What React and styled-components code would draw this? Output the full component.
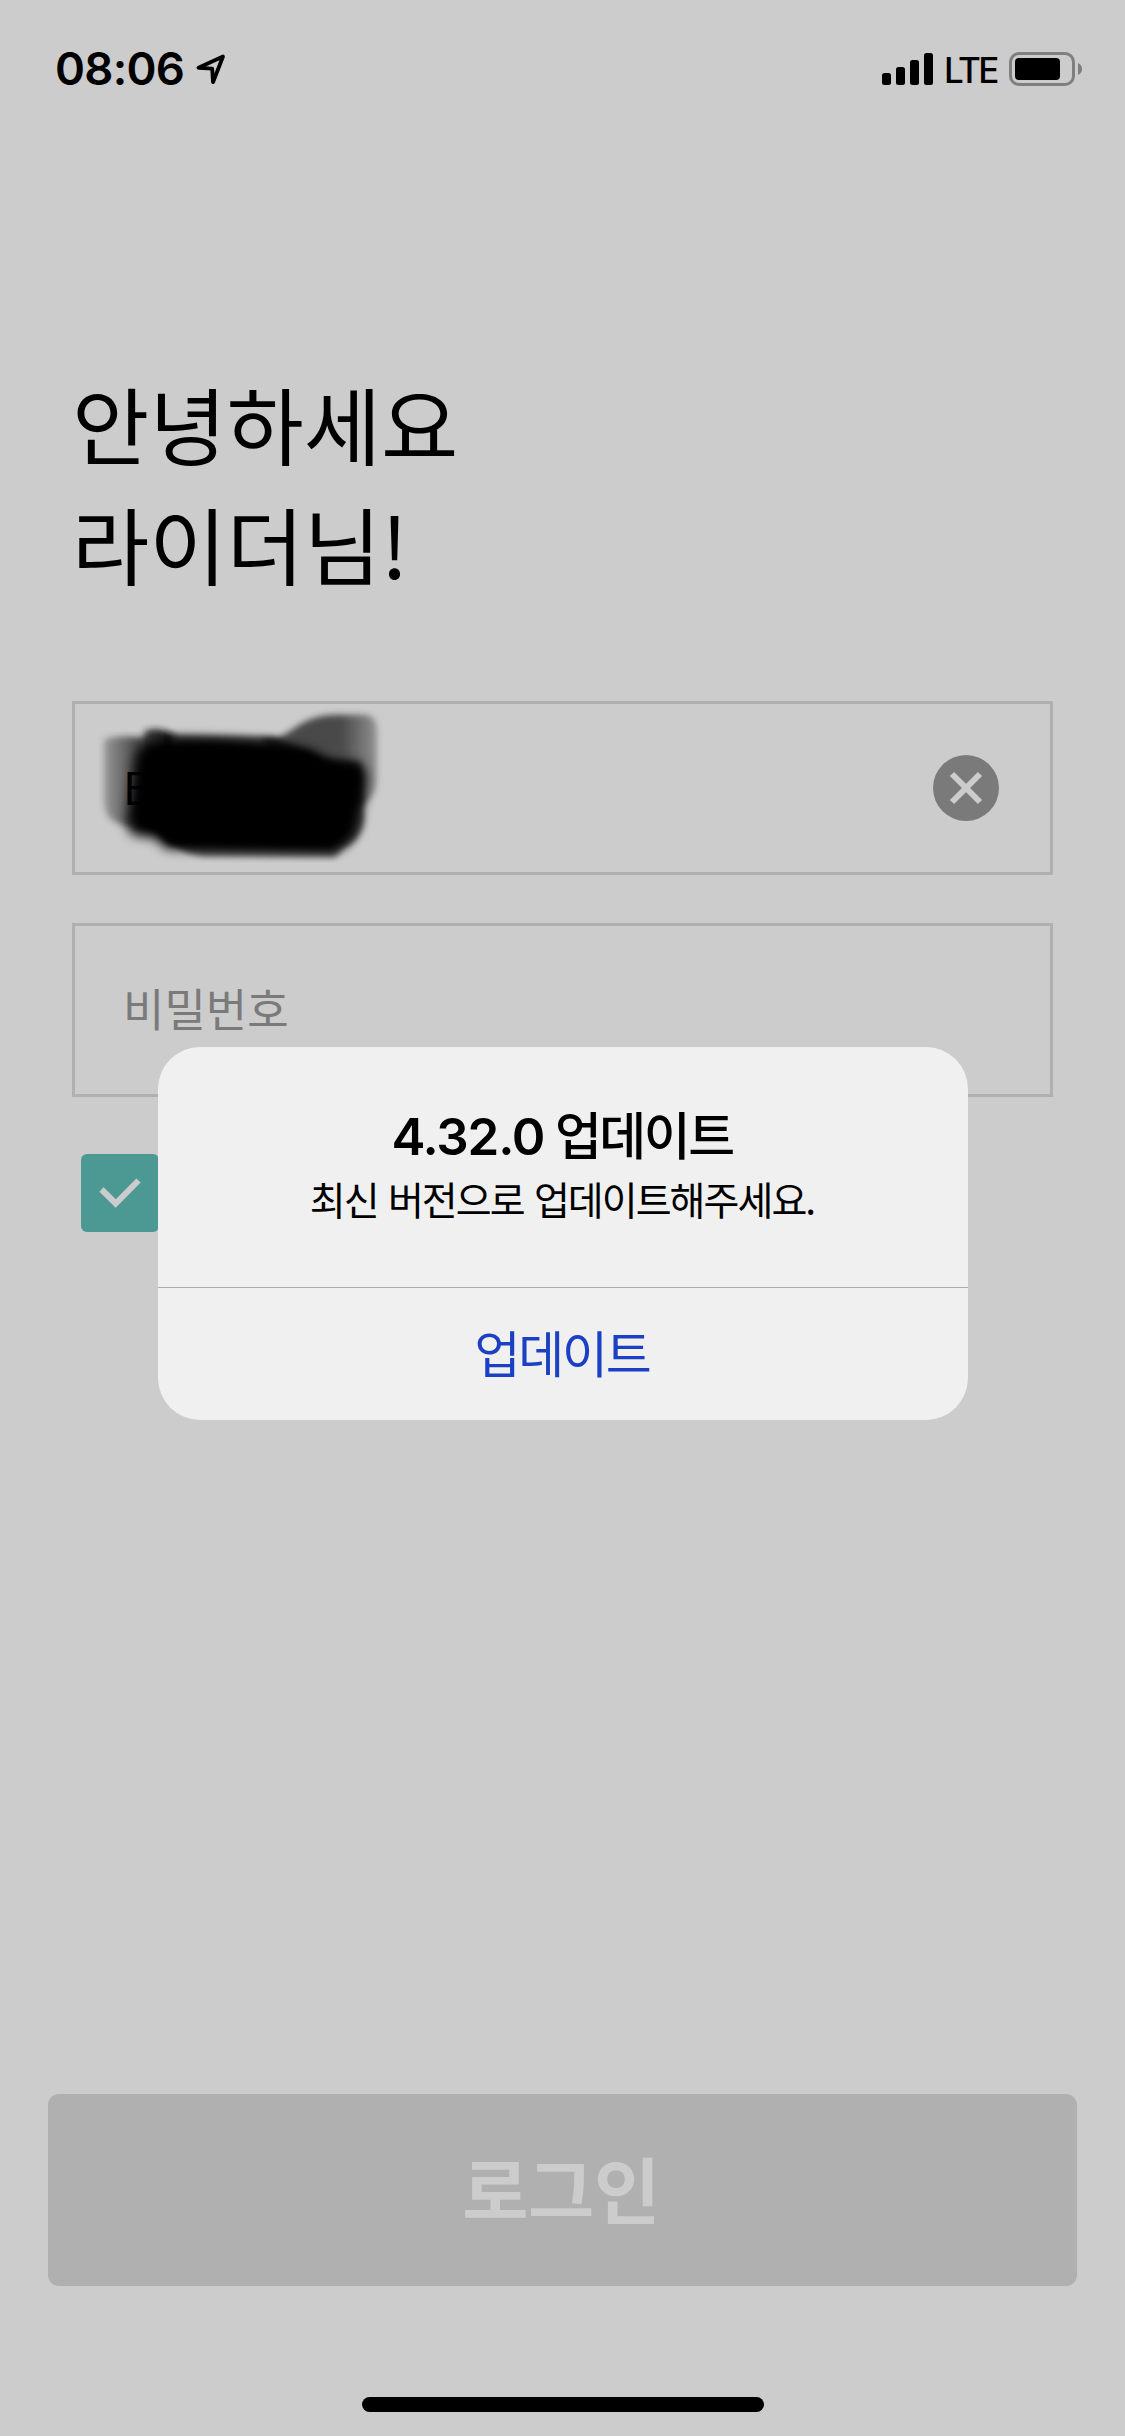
import React from 'react';
import styled, { createGlobalStyle } from 'styled-components';

const GlobalStyle = createGlobalStyle`
  * {
    box-sizing: border-box;
  }

  body {
    margin: 0;
    background: #cccccc;
    font-family: Inter, 'Noto Sans CJK KR', sans-serif;
  }

  button, h1, h2, p {
    margin: 0;
    padding: 0;
    font: inherit;
  }
`;

const Screen = styled.div`
  position: relative;
  width: 1125px;
  height: 2436px;
  display: flex;
  flex-direction: column;
  overflow: hidden;
  background: #cccccc;
  color: #000;
`;

const StatusBar = styled.header`
  height: 138px;
  padding: 0 42px 0 55px;
  display: flex;
  align-items: center;
  justify-content: space-between;
`;

const StatusGroup = styled.div`
  display: flex;
  align-items: center;
`;

const Clock = styled.span`
  width: 140px;
  font-size: 45.5px;
  font-weight: 600;
  letter-spacing: -0.7px;
  line-height: 60px;
  white-space: nowrap;
`;

const Network = styled.span`
  width: 65px;
  margin-left: 10px;
  font-size: 35px;
  font-weight: 500;
  letter-spacing: -2.6px;
  line-height: 60px;
  padding-top: 2px;
`;

const Greeting = styled.h1`
  margin: 225px 0 0 72px;
  font-family: 'Noto Sans CJK KR', sans-serif;
  font-size: 84px;
  font-weight: 400;
  line-height: 120px;
`;

const Form = styled.form`
  margin: 98px 72px 0;
  display: flex;
  flex-direction: column;
  gap: 48px;
`;

const Field = styled.label`
  position: relative;
  height: 174px;
  padding: 0 51px 0 48px;
  display: flex;
  align-items: center;
  justify-content: space-between;
  border: 3px solid #b0b0b0;
  font-family: 'Noto Sans CJK KR', sans-serif;
  font-size: 45px;
  color: ${(props) => (props.$empty ? '#7a7a7a' : '#000')};
`;

const FieldText = styled.span`
  position: relative;
  z-index: 1;
  padding-bottom: 6px;
`;

const Scribble = styled.svg`
  position: absolute;
  left: 18px;
  top: 3px;
`;

const Checkbox = styled.div`
  width: 78px;
  height: 78px;
  margin: 9px 0 0 9px;
  display: flex;
  align-items: center;
  justify-content: center;
  border-radius: 6px;
  background: #4c9994;
`;

const LoginButton = styled.button`
  height: 192px;
  margin: auto 48px 111px;
  padding: 0 3px 8px 0;
  border: 0;
  border-radius: 11px;
  background: #b0b0b0;
  color: #cccccc;
  font-family: 'Noto Sans CJK KR', sans-serif;
  font-size: 72px;
  font-weight: 700;
  letter-spacing: -0.4px;
`;

const HomeIndicator = styled.div`
  width: 402px;
  height: 15px;
  margin: 0 auto 24px;
  border-radius: 8px;
  background: #000;
`;

const Alert = styled.section`
  position: absolute;
  left: 158px;
  top: 1047px;
  width: 810px;
  height: 373px;
  display: flex;
  flex-direction: column;
  border-radius: 42px;
  background: #f0f0f0;
  text-align: center;
`;

const AlertBody = styled.div`
  height: 241px;
  padding: 54px 2px 0 0;
  border-bottom: 1px solid #adadad;
`;

const AlertTitle = styled.h2`
  font-size: 51px;
  font-weight: 600;
  letter-spacing: -1.2px;
  word-spacing: -1px;
  line-height: 64px;
`;

const Korean = styled.span`
  font-family: 'Noto Sans CJK KR', sans-serif;
  font-weight: ${(props) => props.$weight || 400};
  letter-spacing: ${(props) => props.$spacing}px;
`;

const AlertMessage = styled.p`
  font-size: 39px;
  line-height: 59px;
  word-spacing: 3.5px;
`;

const AlertAction = styled.button`
  flex: 1;
  padding: 0 2px 6px 0;
  border: 0;
  background: none;
  color: #1c40c4;
  font-size: 50px;
`;

const LocationIcon = () => (
  <svg width="32" height="32" viewBox="0 0 32 32" fill="none">
    <path
      d="M28 3.5L3.5 14.8L17.2 15.6L18 29.2Z"
      stroke="#000"
      strokeWidth="3.8"
      strokeLinejoin="round"
    />
  </svg>
);

const SignalIcon = () => (
  <svg width="52" height="32" viewBox="0 0 52 32">
    <rect x="0" y="20" width="9" height="12" rx="2.5" />
    <rect x="14" y="14" width="9" height="18" rx="2.5" />
    <rect x="28" y="7" width="9" height="25" rx="2.5" />
    <rect x="42" y="0" width="9" height="32" rx="2.5" />
  </svg>
);

const BatteryIcon = () => (
  <svg width="74" height="34" viewBox="0 0 74 34">
    <rect x="1.5" y="1.5" width="63" height="31" rx="8.5" fill="none" stroke="#7f7f7f" strokeWidth="3" />
    <rect x="6" y="6" width="45" height="22" rx="4" />
    <path d="M69 11C71.5 12 73 14.3 73 17S71.5 22 69 23Z" fill="#7f7f7f" />
  </svg>
);

const ClearIcon = () => (
  <svg width="66" height="66" viewBox="0 0 66 66">
    <circle cx="33" cy="33" r="33" fill="#7a7a7a" />
    <path d="M19 19L47 47M47 19L19 47" stroke="#cccccc" strokeWidth="6" />
  </svg>
);

const CheckIcon = () => (
  <svg width="78" height="78" viewBox="0 0 78 78" fill="none">
    <path d="M20.5 35.5L34.7 49.5L57.5 26.5" stroke="#cccccc" strokeWidth="6" />
  </svg>
);

const Redaction = () => (
  <Scribble width="294" height="156" viewBox="99 51 882 468">
    <defs>
      <filter id="soft" x="-20%" y="-20%" width="140%" height="140%">
        <feGaussianBlur stdDeviation="9" />
      </filter>
      <filter id="softer" x="-20%" y="-20%" width="140%" height="140%">
        <feGaussianBlur stdDeviation="17" />
      </filter>
      <linearGradient id="tail" x1="0" x2="1" y1="0" y2="0">
        <stop offset="0" stopColor="#333" stopOpacity="0.85" />
        <stop offset="0.7" stopColor="#333" stopOpacity="0.85" />
        <stop offset="1" stopColor="#444" stopOpacity="0.45" />
      </linearGradient>
      <linearGradient id="start" x1="0" x2="1" y1="0" y2="0">
        <stop offset="0" stopColor="#333" stopOpacity="0.35" />
        <stop offset="0.45" stopColor="#222" stopOpacity="0.75" />
        <stop offset="0.9" stopColor="#111" stopOpacity="0.95" />
      </linearGradient>
    </defs>
    <path
      d="M132 150Q150 134 250 142L256 122Q292 108 345 134L345 300L215 410Q160 400 146 380Q130 350 132 320Z"
      fill="url(#start)"
      filter="url(#soft)"
    />
    <path
      d="M600 148L650 144C700 128 725 78 820 74L915 74Q950 78 950 120L950 280Q942 330 905 348L720 300Z"
      fill="url(#tail)"
      filter="url(#soft)"
    />
    <path
      d="M340 136L640 140L780 200L900 220L912 390Q902 450 850 474L825 500L430 498Q370 492 340 460Z"
      fill="#000"
      fillOpacity="0.65"
      filter="url(#soft)"
    />
    <path
      d="M226 200Q236 150 340 146C480 142 610 154 750 178Q785 194 815 218L890 216Q922 228 918 275L896 400Q884 458 825 482L320 476L285 444L225 436Q196 425 204 380Z"
      fill="#000"
      filter="url(#softer)"
    />
    <path
      d="M276 185C420 154 620 169 745 192Q790 226 868 236L856 390Q846 446 810 472L330 462L295 426L246 404Z"
      fill="#000"
      filter="url(#soft)"
    />
  </Scribble>
);

const App = () => {
  return (
    <>
      <GlobalStyle />
      <Screen>
        <StatusBar>
          <StatusGroup>
            <Clock>08:06</Clock>
            <LocationIcon />
          </StatusGroup>
          <StatusGroup>
            <SignalIcon />
            <Network>LTE</Network>
            <BatteryIcon />
          </StatusGroup>
        </StatusBar>
        <Greeting>
          안녕하세요
          <br />
          라이더님!
        </Greeting>
        <Form>
          <Field>
            <Redaction />
            <FieldText>B</FieldText>
            <ClearIcon />
          </Field>
          <Field $empty>
            <FieldText>비밀번호</FieldText>
          </Field>
          <Checkbox>
            <CheckIcon />
          </Checkbox>
        </Form>
        <LoginButton>로그인</LoginButton>
        <HomeIndicator />
        <Alert>
          <AlertBody>
            <AlertTitle>
              4.32.0 <Korean $weight={500} $spacing={-2.5}>업데이트</Korean>
            </AlertTitle>
            <AlertMessage>
              <Korean $spacing={-1.95}>최신 버전으로 업데이트해주세요.</Korean>
            </AlertMessage>
          </AlertBody>
          <AlertAction>
            <Korean $spacing={-2.2}>업데이트</Korean>
          </AlertAction>
        </Alert>
      </Screen>
    </>
  );
};

export default App;
